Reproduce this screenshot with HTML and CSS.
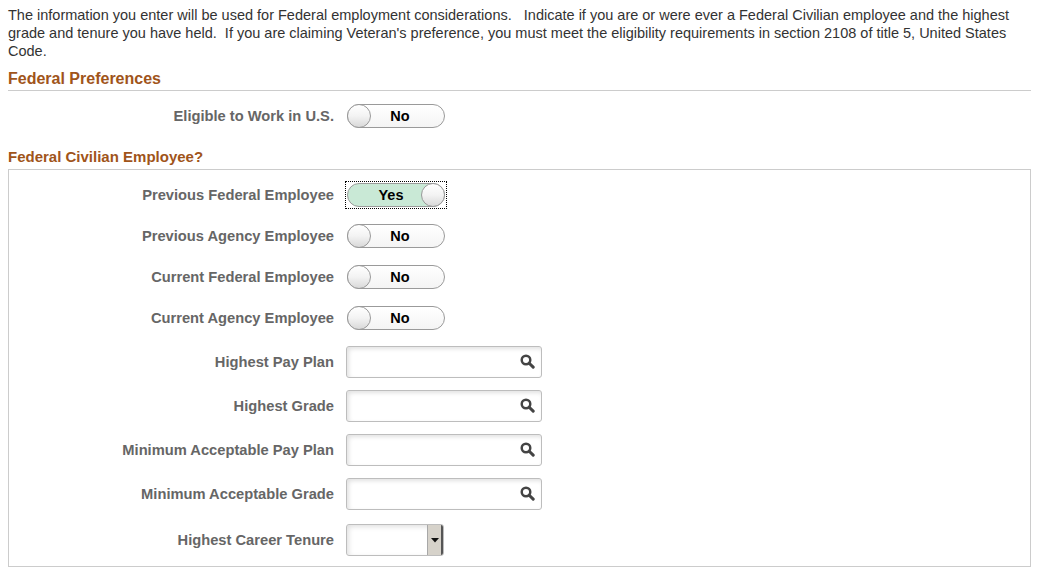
FILE: index.html
```html
<!DOCTYPE html>
<html>
<head>
<meta charset="utf-8">
<link rel="stylesheet" href="styles.css">
</head>
<body>
<div class="page">
  <p class="intro">The information you enter will be used for Federal employment considerations.&nbsp;&nbsp; Indicate if you are or were ever a Federal Civilian employee and the highest grade and tenure you have held.&nbsp; If you are claiming Veteran's preference, you must meet the eligibility requirements in section 2108 of title 5, United States Code.</p>

  <h2 class="section-title">Federal Preferences</h2>

  <div class="row row-eligible">
    <label class="lbl">Eligible to Work in U.S.</label>
    <div class="toggle off"><span class="knob"></span><span class="tval">No</span></div>
  </div>

  <h3 class="group-title">Federal Civilian Employee?</h3>

  <div class="group-box">
    <div class="row row-toggle first">
      <label class="lbl">Previous Federal Employee</label>
      <div class="focus"><div class="toggle on"><span class="tval">Yes</span><span class="knob"></span></div></div>
    </div>
    <div class="row row-toggle">
      <label class="lbl">Previous Agency Employee</label>
      <div class="toggle off"><span class="knob"></span><span class="tval">No</span></div>
    </div>
    <div class="row row-toggle">
      <label class="lbl">Current Federal Employee</label>
      <div class="toggle off"><span class="knob"></span><span class="tval">No</span></div>
    </div>
    <div class="row row-toggle">
      <label class="lbl">Current Agency Employee</label>
      <div class="toggle off"><span class="knob"></span><span class="tval">No</span></div>
    </div>

    <div class="row row-input first-input">
      <label class="lbl">Highest Pay Plan</label>
      <div class="lookup"><svg class="mag" viewBox="0 0 14 14" width="15" height="15"><circle cx="5.6" cy="5.6" r="4" fill="none" stroke="#444" stroke-width="2.3"/><line x1="8.6" y1="8.6" x2="12.3" y2="12.3" stroke="#444" stroke-width="2.8" stroke-linecap="round"/></svg></div>
    </div>
    <div class="row row-input">
      <label class="lbl">Highest Grade</label>
      <div class="lookup"><svg class="mag" viewBox="0 0 14 14" width="15" height="15"><circle cx="5.6" cy="5.6" r="4" fill="none" stroke="#444" stroke-width="2.3"/><line x1="8.6" y1="8.6" x2="12.3" y2="12.3" stroke="#444" stroke-width="2.8" stroke-linecap="round"/></svg></div>
    </div>
    <div class="row row-input">
      <label class="lbl">Minimum Acceptable Pay Plan</label>
      <div class="lookup"><svg class="mag" viewBox="0 0 14 14" width="15" height="15"><circle cx="5.6" cy="5.6" r="4" fill="none" stroke="#444" stroke-width="2.3"/><line x1="8.6" y1="8.6" x2="12.3" y2="12.3" stroke="#444" stroke-width="2.8" stroke-linecap="round"/></svg></div>
    </div>
    <div class="row row-input">
      <label class="lbl">Minimum Acceptable Grade</label>
      <div class="lookup"><svg class="mag" viewBox="0 0 14 14" width="15" height="15"><circle cx="5.6" cy="5.6" r="4" fill="none" stroke="#444" stroke-width="2.3"/><line x1="8.6" y1="8.6" x2="12.3" y2="12.3" stroke="#444" stroke-width="2.8" stroke-linecap="round"/></svg></div>
    </div>
    <div class="row row-select">
      <label class="lbl">Highest Career Tenure</label>
      <div class="select"><span class="sel-btn"><svg viewBox="0 0 8 5" width="8" height="5"><polygon points="0,0 8,0 4,4.5" fill="#111"/></svg></span></div>
    </div>
  </div>
</div>
</body>
</html>
```

FILE: styles.css
```css
html, body {
  margin: 0;
  padding: 0;
  background: #fff;
}

.page {
  padding: 6px 14px 0 8px;
  font-family: "Liberation Sans", Arial, sans-serif;
  font-size: 14px;
  color: #333;
}

.intro {
  margin: 0;
  line-height: 18px;
  font-size: 14.5px;
  color: #333;
}

.section-title {
  margin: 9px 0 0 0;
  padding: 0 0 1px 0;
  font-size: 16px;
  line-height: 20px;
  font-weight: bold;
  color: #a0541a;
  border-bottom: 1px solid #cccccc;
}

.group-title {
  margin: 0;
  font-size: 15px;
  line-height: 18px;
  font-weight: bold;
  color: #a0541a;
}

.row {
  display: flex;
  align-items: center;
}

.lbl {
  width: 326px;
  text-align: right;
  font-weight: bold;
  font-size: 14.7px;
  color: #666;
  margin-right: 13px;
  flex: none;
  white-space: nowrap;
}

.row-eligible {
  margin-top: 13px;
  margin-bottom: 20px;
}

.group-box {
  margin-top: 3px;
  border: 1px solid #cccccc;
  padding: 13px 0 10px 0;
}

.group-box .lbl {
  width: 325px;
}

.row-toggle {
  height: 24px;
  margin-top: 17px;
}

.row-toggle.first {
  margin-top: 0;
}

.toggle {
  position: relative;
  box-sizing: border-box;
  width: 98px;
  height: 24px;
  border: 1px solid #9a9a9a;
  border-radius: 12px;
  background: linear-gradient(#ffffff, #f4f4f4);
  display: flex;
  align-items: center;
  flex: none;
}

.toggle.on {
  background: #c9e9d6;
}

.knob {
  box-sizing: border-box;
  width: 24px;
  height: 24px;
  margin: -1px;
  border: 1px solid #9a9a9a;
  border-radius: 50%;
  background: linear-gradient(#ffffff 0%, #f3f3f3 50%, #d9d9d9 100%);
  flex: none;
}

.tval {
  flex: 1;
  text-align: center;
  font-weight: bold;
  font-size: 14.5px;
  color: #000;
}

.toggle.off .tval {
  padding-right: 14px;
}

.toggle.on .tval {
  padding-left: 12px;
}

.focus {
  outline: 1px dotted #000;
  outline-offset: 1px;
}

.row-input {
  margin-top: 12px;
}

.row-input.first-input {
  margin-top: 16px;
}

.row-input .lbl,
.row-select .lbl {
  margin-right: 12px;
}

.lookup {
  box-sizing: border-box;
  width: 196px;
  height: 32px;
  border: 1px solid #bdbdbd;
  border-radius: 3px;
  background: #fff;
  box-shadow: inset 2px 2px 4px rgba(0,0,0,0.12);
  display: flex;
  align-items: center;
  justify-content: flex-end;
  padding-right: 6px;
  padding-bottom: 2px;
  flex: none;
}

.mag {
  display: block;
}

.row-select {
  margin-top: 14px;
}

.select {
  box-sizing: border-box;
  width: 98px;
  height: 32px;
  border: 1px solid #bdbdbd;
  border-radius: 3px;
  background: #fff;
  box-shadow: inset 2px 2px 5px rgba(0,0,0,0.12);
  display: flex;
  justify-content: flex-end;
  overflow: hidden;
  flex: none;
}

.sel-btn {
  width: 13px;
  height: 100%;
  background: #d6d2ca;
  border-left: 1px solid #a8a8a8;
  border-right: 2px solid #555;
  display: flex;
  align-items: center;
  justify-content: center;
}
```
